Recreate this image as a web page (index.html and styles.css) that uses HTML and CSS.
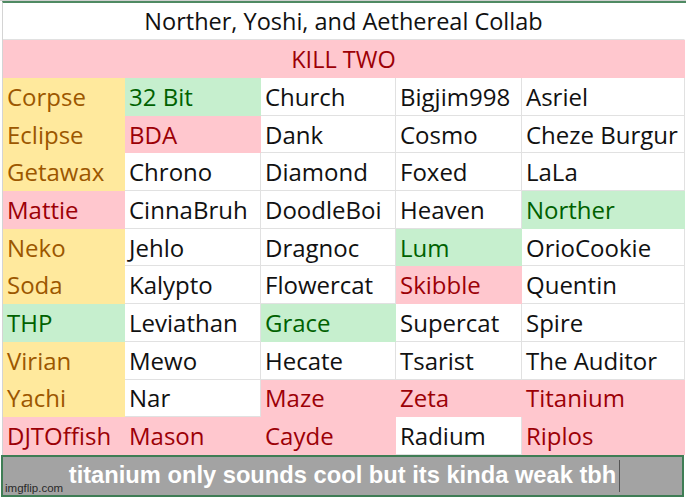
FILE: index.html
```html
<!DOCTYPE html>
<html>
<head>
<meta charset="utf-8">
<link rel="stylesheet" href="styles.css">
</head>
<body>
<div class="page">
  <div class="sheet">
    <div class="cell title">Norther, Yoshi, and Aethereal Collab</div>
    <div class="cell banner bad">KILL TWO</div>

    <div class="cell neu">Corpse</div><div class="cell good">32 Bit</div><div class="cell">Church</div><div class="cell">Bigjim998</div><div class="cell">Asriel</div>
    <div class="cell neu">Eclipse</div><div class="cell bad">BDA</div><div class="cell">Dank</div><div class="cell">Cosmo</div><div class="cell">Cheze Burgur</div>
    <div class="cell neu">Getawax</div><div class="cell">Chrono</div><div class="cell">Diamond</div><div class="cell">Foxed</div><div class="cell">LaLa</div>
    <div class="cell bad">Mattie</div><div class="cell">CinnaBruh</div><div class="cell">DoodleBoi</div><div class="cell">Heaven</div><div class="cell good">Norther</div>
    <div class="cell neu">Neko</div><div class="cell">Jehlo</div><div class="cell">Dragnoc</div><div class="cell good">Lum</div><div class="cell">OrioCookie</div>
    <div class="cell neu">Soda</div><div class="cell">Kalypto</div><div class="cell">Flowercat</div><div class="cell bad">Skibble</div><div class="cell">Quentin</div>
    <div class="cell good">THP</div><div class="cell">Leviathan</div><div class="cell good">Grace</div><div class="cell">Supercat</div><div class="cell">Spire</div>
    <div class="cell neu">Virian</div><div class="cell">Mewo</div><div class="cell">Hecate</div><div class="cell">Tsarist</div><div class="cell">The Auditor</div>
    <div class="cell neu">Yachi</div><div class="cell">Nar</div><div class="cell bad">Maze</div><div class="cell bad">Zeta</div><div class="cell bad">Titanium</div>
    <div class="cell bad">DJTOffish</div><div class="cell bad">Mason</div><div class="cell bad">Cayde</div><div class="cell">Radium</div><div class="cell bad">Riplos</div>
  </div>
  <div class="caption">
    <span class="caption-text">titanium only sounds cool but its kinda weak tbh</span><span class="cursor"></span>
    <span class="watermark">imgflip.com</span>
  </div>
</div>
</body>
</html>
```
FILE: styles.css
```css
html, body {
  margin: 0;
  padding: 0;
  background: #ffffff;
}
.page {
  width: 686px;
  height: 499px;
  position: relative;
  overflow: hidden;
  background: #ffffff;
  border-top: 1px solid #d0d0d0;
  box-sizing: border-box;
}
.sheet {
  margin-left: 2px;
  border-top: 2px solid #4f8a63;
  border-left: 1px solid #d4d4d4;
  display: grid;
  grid-template-columns: 122px 136px 135px 126px 163px;
  grid-template-rows: 37px 38px repeat(10, 37.7px);
  font-family: "Open Sans", "Liberation Sans", sans-serif;
  font-size: 24px;
  color: #111111;
}
.cell {
  display: flex;
  align-items: center;
  padding-left: 4px;
  white-space: nowrap;
  overflow: hidden;
  background: #ffffff;
  border-right: 1px solid #e1e1e1;
  border-bottom: 1px solid #e1e1e1;
  box-sizing: border-box;
}
.title {
  grid-column: 1 / -1;
  justify-content: center;
  padding-left: 0;
  font-size: 23.5px;
  border-right-color: #ffffff;
}
.banner {
  grid-column: 1 / -1;
  justify-content: center;
  padding-left: 0;
  font-size: 23.5px;
}
.neu {
  background: #ffe99d;
  color: #9c5700;
  border-color: #ffe99d;
}
.good {
  background: #c6efce;
  color: #006100;
  border-color: #c6efce;
}
.bad {
  background: #ffc7ce;
  color: #9c0006;
  border-color: #ffc7ce;
}
.caption {
  margin: 0 2px 0 1px;
  height: 42px;
  background: #a3a3a3;
  border: 2px solid #3f7d55;
  box-sizing: border-box;
  display: flex;
  align-items: center;
  justify-content: center;
  position: relative;
}
.caption-text {
  font-family: "Liberation Sans", Arial, sans-serif;
  font-weight: bold;
  font-size: 23.7px;
  color: #ffffff;
  margin-left: 4px;
}
.cursor {
  width: 1px;
  height: 32px;
  background: #555555;
  margin-left: 3px;
}
.watermark {
  position: absolute;
  left: 2px;
  bottom: 1px;
  font-family: "Liberation Sans", Arial, sans-serif;
  font-size: 11.5px;
  color: #2a2a2a;
}
```
